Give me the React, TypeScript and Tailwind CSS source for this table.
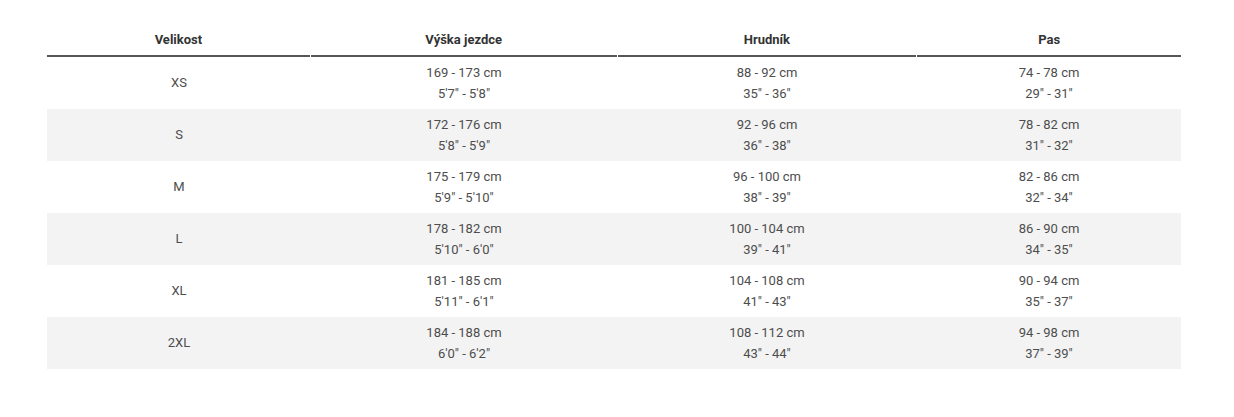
import React from "react";

const rows = [
  ["XS", "169 - 173 cm", "5'7\" - 5'8\"", "88 - 92 cm", "35\" - 36\"", "74 - 78 cm", "29\" - 31\""],
  ["S", "172 - 176 cm", "5'8\" - 5'9\"", "92 - 96 cm", "36\" - 38\"", "78 - 82 cm", "31\" - 32\""],
  ["M", "175 - 179 cm", "5'9\" - 5'10\"", "96 - 100 cm", "38\" - 39\"", "82 - 86 cm", "32\" - 34\""],
  ["L", "178 - 182 cm", "5'10\" - 6'0\"", "100 - 104 cm", "39\" - 41\"", "86 - 90 cm", "34\" - 35\""],
  ["XL", "181 - 185 cm", "5'11\" - 6'1\"", "104 - 108 cm", "41\" - 43\"", "90 - 94 cm", "35\" - 37\""],
  ["2XL", "184 - 188 cm", "6'0\" - 6'2\"", "108 - 112 cm", "43\" - 44\"", "94 - 98 cm", "37\" - 39\""],
];

const widths = ["w-[264px]", "w-[306px]", "w-[300px]", "w-[264px]"];
const headWidths = ["w-[263px]", "w-[306px]", "w-[299px]", "w-[264px]"];
const heads = ["Velikost", "Výška jezdce", "Hrudník", "Pas"];

export default function App() {
  return (
    <div
      className="w-[1234px] h-[417px] bg-white pt-[21px] pl-[47px]"
      style={{ fontFamily: "Roboto, 'Liberation Sans', sans-serif" }}
    >
      <div className="w-[1134px]">
        <div className="flex gap-px">
          {heads.map((h, i) => (
            <div
              key={h}
              className={`${headWidths[i]} h-[36px] pt-[3px] flex items-center justify-center border-b-2 border-[#575757] text-[13px] font-bold text-[#333]`}
            >
              {h}
            </div>
          ))}
        </div>
        {rows.map((r, idx) => (
          <div
            key={r[0]}
            className={`flex h-[52px] text-[13px] text-[#4d4d4d] ${idx % 2 === 1 ? "bg-[#f3f3f3]" : "bg-white"}`}
          >
            <div className={`${widths[0]} flex items-center justify-center`}>{r[0]}</div>
            <div className={`${widths[1]} flex flex-col items-center justify-center leading-[21px]`}>
              <span>{r[1]}</span>
              <span>{r[2]}</span>
            </div>
            <div className={`${widths[2]} flex flex-col items-center justify-center leading-[21px]`}>
              <span>{r[3]}</span>
              <span>{r[4]}</span>
            </div>
            <div className={`${widths[3]} flex flex-col items-center justify-center leading-[21px]`}>
              <span>{r[5]}</span>
              <span>{r[6]}</span>
            </div>
          </div>
        ))}
      </div>
    </div>
  );
}
